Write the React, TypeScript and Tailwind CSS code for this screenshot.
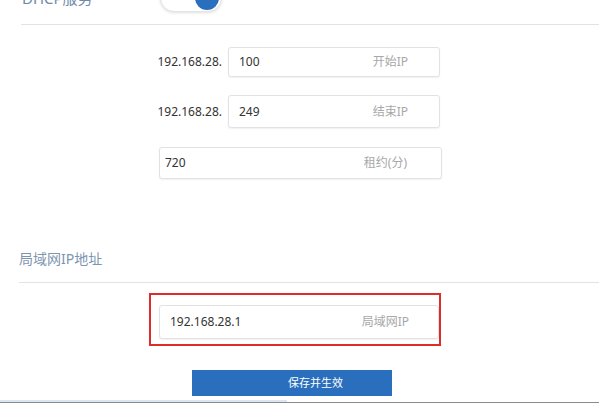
const font = { fontFamily: '"Noto Sans", "Noto Sans CJK SC", sans-serif' }

function Field({ value, hint, className }: { value: string; hint: string; className: string }) {
  return (
    <div
      className={`flex items-center justify-between rounded-[3px] border border-[#e2e2e2] bg-white pl-[10px] pr-[31px] text-[12px] shadow-[0_1px_2px_rgba(0,0,0,0.06)] ${className}`}
    >
      <span className="text-[#333]">{value}</span>
      <span className="text-[#a8a8a8]">{hint}</span>
    </div>
  )
}

export default function App() {
  return (
    <div className="h-[405px] w-[599px] overflow-hidden bg-white" style={font}>
      {/* DHCP row, cut off at the top */}
      <div className="-mt-[16px] flex h-[28px] items-center">
        <div className="w-[160px] pl-[22px] text-[15px] text-[#6f8aa8]">DHCP服务</div>
        <div className="flex h-[28px] w-[62px] items-center justify-end rounded-full border border-[#e4e4e4] bg-white pr-[2px] shadow-[0_1px_3px_rgba(0,0,0,0.12)]">
          <div className="h-[24px] w-[24px] rounded-full bg-[#2a6fbd]" />
        </div>
      </div>
      <div className="ml-[21px] mt-[12px] border-t border-[#e3e3e3]" />

      {/* range rows */}
      <div className="mt-[22px] flex items-center">
        <div className="w-[228px] pr-[6px] text-right text-[12px] text-[#333]">192.168.28.</div>
        <Field value="100" hint="开始IP" className="h-[30px] w-[212px]" />
      </div>
      <div className="mt-[18px] flex items-center">
        <div className="relative w-[228px] pr-[6px] text-right text-[12px] text-[#333]">192.168.28.</div>
        <Field value="249" hint="结束IP" className="h-[33px] w-[212px]" />
      </div>
      <div className="mt-[19px] flex">
        <Field value="720" hint="租约(分)" className="ml-[159px] h-[32px] w-[283px] !pl-[5px] !pr-[34px]" />
      </div>

      {/* LAN section */}
      <div className="mt-[70px] pl-[19px] text-[14px] leading-[20px] text-[#7d95b0]">局域网IP地址</div>
      <div className="ml-[19px] mt-[13px] border-t border-[#e3e3e3]" />

      <div className="ml-[149px] mt-[10px] h-[53px] w-[292px] border-2 border-[#e02b2b] pl-[8px] pt-[10px]">
        <Field value="192.168.28.1" hint="局域网IP" className="h-[34px] w-[280px] !pr-[29px]" />
      </div>

      <div className="ml-[192px] mt-[24px] flex h-[26px] w-[200px] items-center bg-[#2a6fbd] pl-[96px] text-[11px] text-white">
        保存并生效
      </div>

      <div className="mt-[4px] h-[2px] w-[287px] bg-[#dbe6f2]" />
      <div className="h-px w-full bg-[#8c8c8c]" />
    </div>
  )
}
